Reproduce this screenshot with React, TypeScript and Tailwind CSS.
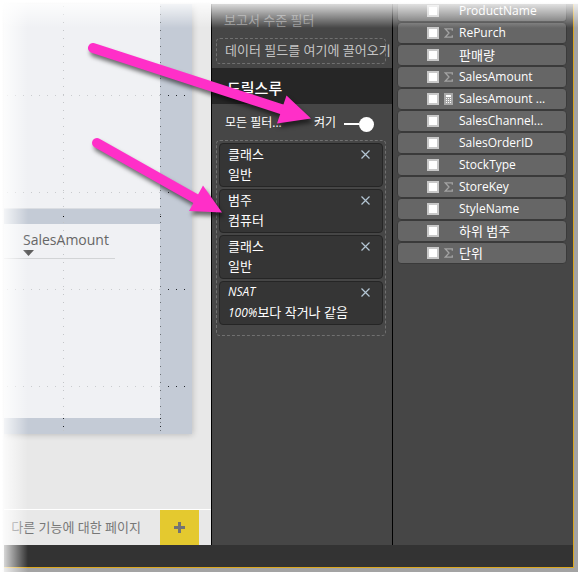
type Field = { name: string; icon?: 'sum' | 'calc'; korean?: boolean };
type Filter = { name: string; value: string; italic?: boolean };

const fields: Field[] = [
  { name: 'ProductName' },
  { name: 'RePurch', icon: 'sum' },
  { name: '판매량', korean: true },
  { name: 'SalesAmount', icon: 'sum' },
  { name: 'SalesAmount ...', icon: 'calc' },
  { name: 'SalesChannel...' },
  { name: 'SalesOrderID' },
  { name: 'StockType' },
  { name: 'StoreKey', icon: 'sum' },
  { name: 'StyleName' },
  { name: '하위 범주', korean: true },
  { name: '단위', icon: 'sum', korean: true },
];

const filters: Filter[] = [
  { name: '클래스', value: '일반' },
  { name: '범주', value: '컴퓨터' },
  { name: '클래스', value: '일반' },
  { name: 'NSAT', value: '100%보다 작거나 같음', italic: true },
];

function SumIcon() {
  return (
    <svg viewBox="0 0 9 10" className="h-[10px] w-[9px]" fill="none" stroke="#a3a3a3" strokeWidth="1.3" aria-hidden="true">
      <path d="M8.300 2.700V.8H1.200L5 5 1.200 9.200h7.100v-2" />
    </svg>
  );
}

function CalcIcon() {
  return (
    <svg viewBox="0 0 9 12" className="h-3 w-[9px]" shapeRendering="crispEdges" aria-hidden="true">
      <rect width="9" height="12" fill="#a8a8a8" />
      <path d="M2 2h5v2H2z" fill="#ffffff" />
      <path d="M2 5h1v1H2zM4 5h1v1H4zM6 5h1v1H6zM2 7h1v1H2zM4 7h1v1H4zM6 7h1v1H6zM2 9h1v1H2zM4 9h1v1H4zM6 9h1v1H6z" fill="#ffffff" />
    </svg>
  );
}

function FieldRow({ field, id }: { field: Field; id: string }) {
  return (
    <li className="flex h-[22px] items-center rounded border border-[#3a3a3a] bg-[#666666] pl-[29px] first:h-[18px] first:rounded-t-none first:border-t-0 first:pb-1">
      <input id={id} type="checkbox" className="size-3 shrink-0 appearance-none border-2 border-[#c8c8c8] bg-white" />
      <span className="ml-[5px] flex w-[10px] shrink-0 items-center">
        {field.icon === 'sum' && <SumIcon />}
        {field.icon === 'calc' && <CalcIcon />}
      </span>
      <label
        htmlFor={id}
        className={`ml-[5px] whitespace-nowrap text-white ${field.korean ? 'pb-px text-[13px] leading-4' : 'text-xs leading-4'}`}
      >
        {field.name}
      </label>
    </li>
  );
}

function FilterCard({ filter }: { filter: Filter }) {
  return (
    <li className="flex h-11 items-start justify-between rounded border border-[#252525] bg-[#353535] pl-2 pr-3 text-[13px] leading-5 text-white">
      <div className="whitespace-nowrap">
        <p className={filter.italic ? 'text-xs leading-5 italic' : ''}>{filter.name}</p>
        <p>
          {filter.italic ? (
            <>
              <em className="text-xs">100%</em>
              {filter.value.slice(4)}
            </>
          ) : (
            filter.value
          )}
        </p>
      </div>
      <button type="button" aria-label={`${filter.name} 제거`} className="mt-[6px]">
        <svg viewBox="0 0 9 9" className="size-[9px]" stroke="#b4c6d4" strokeWidth="1.2" fill="none">
          <path d="M.5.5l8 8M8.5.5l-8 8" />
        </svg>
      </button>
    </li>
  );
}

function GridDots() {
  return (
    <svg className="pointer-events-none absolute inset-0 size-full" shapeRendering="crispEdges" aria-hidden="true">
      <g strokeDasharray="1 7" fill="none">
        <path d="M59.5 2V430" stroke="#c3c5c8" />
        <path d="M3 91.5H156M3 188.5H156M3 285.5H156M3 382.5H156" stroke="#c9cbce" />
        <path d="M156.5 2V430" stroke="#6d7278" />
        <path d="M164 91.5H186M164 188.5H166M164 285.5H186M164 382.5H186" stroke="#22262c" />
        <path d="M59.5 414V430M156.5 414V430" stroke="#22262c" />
      </g>
      <path d="M59 212h1v1h-1zM156 212h1v1h-1z" fill="#111" />
    </svg>
  );
}

function ReportCanvas() {
  return (
    <main className="flex min-w-0 flex-1 flex-col bg-[#e8e8e8]">
      <div className="relative mr-[19px] bg-[#c4cbd6] pb-4 pr-8 shadow-[1px_1px_6px_rgba(0,0,0,0.18)]">
        <div className="h-[205px] border-b border-[#dadde2] bg-[#f0f1f4]" />
        <div className="mt-[15px] h-[194px] bg-[#f0f1f4] pt-1">
          <div className="mr-[45px] h-[31px] border-b border-[#d2d4d6] pl-[19px] text-[#666666]">
            <p className="text-sm leading-6">SalesAmount</p>
            <svg viewBox="0 0 11 6" className="-mt-[2px] h-[6px] w-[11px]" aria-hidden="true">
              <path d="M0 0h11L5.500 6z" fill="#5f5f5f" />
            </svg>
          </div>
        </div>
        <GridDots />
      </div>
      <footer className="mt-auto flex h-9 border-t border-white pr-3">
        <button type="button" className="flex min-w-0 flex-1 items-center justify-end whitespace-nowrap pr-[19px] text-[13px] text-[#777777]">
          다른 기능에 대한 페이지
        </button>
        <button type="button" aria-label="페이지 추가" className="flex w-[39px] items-center justify-center bg-[#e4c92f]">
          <svg viewBox="0 0 11 11" className="size-[11px]" aria-hidden="true">
            <path d="M4 0h3v4h4v3H7v4H4V7H0V4h4z" fill="#737373" />
          </svg>
        </button>
      </footer>
    </main>
  );
}

function FilterPanel() {
  return (
    <aside className="w-[181px] shrink-0 overflow-hidden border-l border-black bg-[#464646]">
      <h2 className="mt-[6px] pl-3 text-[13px] leading-5 text-[#8c8c8c]">보고서 수준 필터</h2>
      <div className="ml-1 mr-[6px] mt-2 flex h-[26px] items-center whitespace-nowrap rounded border border-dashed border-[#707070] pl-2 text-[13px] text-[#c4c4c4]">
        데이터 필드를 여기에 끌어오기
      </div>
      <h2 className="mt-1 flex h-9 items-center bg-[#262626] pl-[15px] pt-1 text-[15px] font-medium text-white">드릴스루</h2>
      <div className="flex h-9 items-center pl-[13px] pt-px text-xs text-white">
        <span>모든 필터...</span>
        <label htmlFor="keep-all" className="ml-auto">
          켜기
        </label>
        <input
          id="keep-all"
          type="checkbox"
          role="switch"
          defaultChecked
          className="ml-2 mr-[18px] mt-[3px] flex h-[15px] w-[30px] appearance-none items-center before:h-[2px] before:flex-1 before:bg-white after:size-[15px] after:rounded-full after:bg-white"
        />
      </div>
      <ul className="ml-1 mr-[6px] flex flex-col gap-[2px] rounded border border-dashed border-[#707070] px-[2px] pb-[10px] pt-[2px]">
        {filters.map((filter, i) => (
          <FilterCard key={i} filter={filter} />
        ))}
      </ul>
    </aside>
  );
}

function FieldPanel() {
  return (
    <aside className="w-[181px] shrink-0 border-l border-black bg-[#464646]">
      <ul className="ml-1 mr-[6px]">
        {fields.map((field, i) => (
          <FieldRow key={i} field={field} id={`field-${i}`} />
        ))}
      </ul>
    </aside>
  );
}

function Arrows() {
  return (
    <svg className="pointer-events-none absolute left-0 top-0 h-[260px] w-[360px] drop-shadow-[2px_4px_2px_rgba(0,0,0,0.55)]" aria-hidden="true">
      <g stroke="#ff2fc8" strokeWidth="10" strokeLinecap="round">
        <path d="M93 48L284 110" />
        <path d="M97 143L198 200" />
      </g>
      <path d="M286.500 95.500L311 118.500L277 123.500zM203 185.500L222 212.500L189 211z" fill="#ff2fc8" />
    </svg>
  );
}

export default function App() {
  return (
    <div className="relative flex h-screen min-h-[460px] flex-col overflow-hidden bg-[#a3a3a3] p-1 font-['Open_Sans','Noto_Sans_CJK_KR',sans-serif]">
      <div className="flex min-h-0 flex-1 flex-col border-b border-r border-[#dca71f]">
        <div className="flex min-h-0 flex-1">
          <ReportCanvas />
          <FilterPanel />
          <FieldPanel />
        </div>
        <div className="h-[22px] shrink-0 bg-[#333333]" />
      </div>
      <div className="pointer-events-none absolute inset-y-0 left-0 w-7 bg-[linear-gradient(to_right,#ffffff_2px,#fffffff2_4px,#ffffffcc_4px,#ffffff00_28px)]" />
      <div className="pointer-events-none absolute inset-x-0 top-0 h-7 bg-[linear-gradient(to_bottom,#ffffff_2px,#fffffff2_4px,#ffffffcc_4px,#ffffff00_28px)]" />
      <Arrows />
    </div>
  );
}
